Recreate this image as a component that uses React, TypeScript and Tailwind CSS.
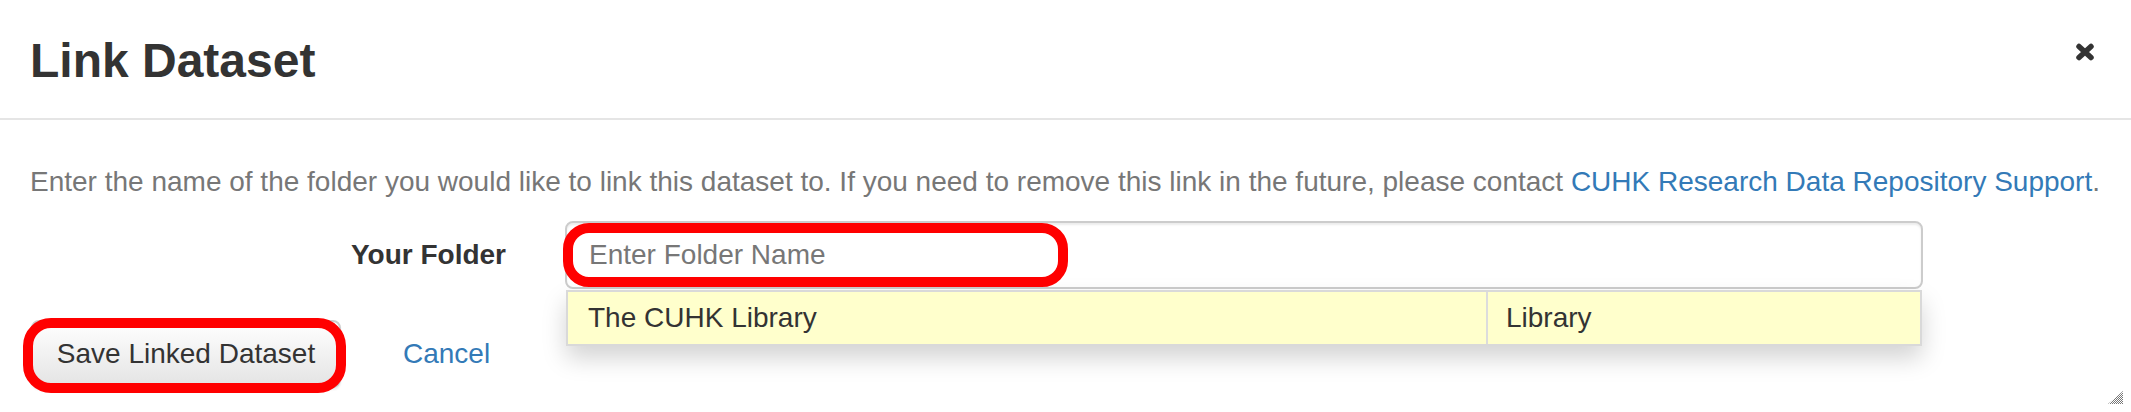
import React from "react";

export default function App() {
  return (
    <div className="relative w-[2131px] h-[412px] overflow-hidden bg-white font-['Liberation_Sans',Arial,sans-serif] text-[#333]">
      {/* Header */}
      <header className="flex h-[120px] items-start justify-between border-b-2 border-[#e5e5e5] pl-[30px] pr-[36px] pt-[37px]">
        <h4 className="text-[48px] font-bold leading-[48px] text-[#333]">Link Dataset</h4>
        <button type="button" className="mt-[6px] p-0" aria-label="Close">
          <svg width="20" height="18" viewBox="0 0 20 18">
            <path d="M4 3.5 L16 14.5 M16 3.5 L4 14.5" stroke="#333" strokeWidth="5.5" strokeLinecap="round" />
          </svg>
        </button>
      </header>

      {/* Body */}
      <div className="pl-[30px] pt-[42px]">
        <p className="whitespace-nowrap text-[28px] leading-[40px] text-[#777]">
          Enter the name of the folder you would like to link this dataset to. If you need to remove this link in the future, please contact{" "}
          <a className="text-[#337ab7]">CUHK Research Data Repository Support</a>.
        </p>

        <div className="mt-[19px] flex items-start">
          <label className="w-[476px] pt-[14px] text-right text-[28px] font-bold leading-[40px] text-[#333]">
            Your Folder
          </label>
          <div className="relative ml-[59px] w-[1358px]">
            <input
              type="text"
              placeholder="Enter Folder Name"
              className="block h-[68px] w-full rounded-[8px] border-2 border-[#ccc] bg-white px-[22px] text-[28px] leading-[40px] text-[#555] shadow-[inset_0_2px_2px_rgba(0,0,0,0.075)] outline-none placeholder:text-[#777]"
            />
            <div className="absolute left-[1px] top-[69px] flex w-[1356px] border-2 border-[#d9d9d9] bg-[#ffffcc] shadow-[0_12px_24px_rgba(0,0,0,0.175)]">
              <div className="w-[918px] px-[20px] py-[6px] text-[28px] leading-[40px] text-[#333]">The CUHK Library</div>
              <div className="flex-1 border-l-2 border-[#dcdcdc] px-[18px] py-[6px] text-[28px] leading-[40px] text-[#333]">Library</div>
            </div>
          </div>
        </div>

        <div className="ml-[1px] mt-[31px] flex items-center">
          <button
            type="button"
            className="h-[68px] w-[310px] rounded-[8px] border-2 border-[#ccc] bg-gradient-to-b from-white to-[#e4e4e4] text-[28px] leading-[40px] text-[#333] shadow-[0_2px_2px_rgba(0,0,0,0.075)]"
          >
            Save Linked Dataset
          </button>
          <a className="ml-[62px] text-[28px] leading-[40px] text-[#337ab7]">Cancel</a>
        </div>
      </div>

      {/* Red annotation highlights */}
      <div className="pointer-events-none absolute left-[563px] top-[223px] h-[64px] w-[505px] rounded-[26px] border-[10px] border-[#ff0000]" />
      <div className="pointer-events-none absolute left-[23px] top-[318px] h-[75px] w-[323px] rounded-[28px] border-[10px] border-[#ff0000]" />

      {/* Resize grip */}
      <svg className="absolute left-[2108px] top-[391px]" width="15" height="13" viewBox="0 0 15 13">
        <defs>
          <pattern id="chk" width="2" height="2" patternUnits="userSpaceOnUse">
            <rect width="1" height="1" fill="#777" />
            <rect x="1" y="1" width="1" height="1" fill="#777" />
          </pattern>
        </defs>
        <polygon points="0,13 15,13 15,0" fill="url(#chk)" />
      </svg>
    </div>
  );
}
